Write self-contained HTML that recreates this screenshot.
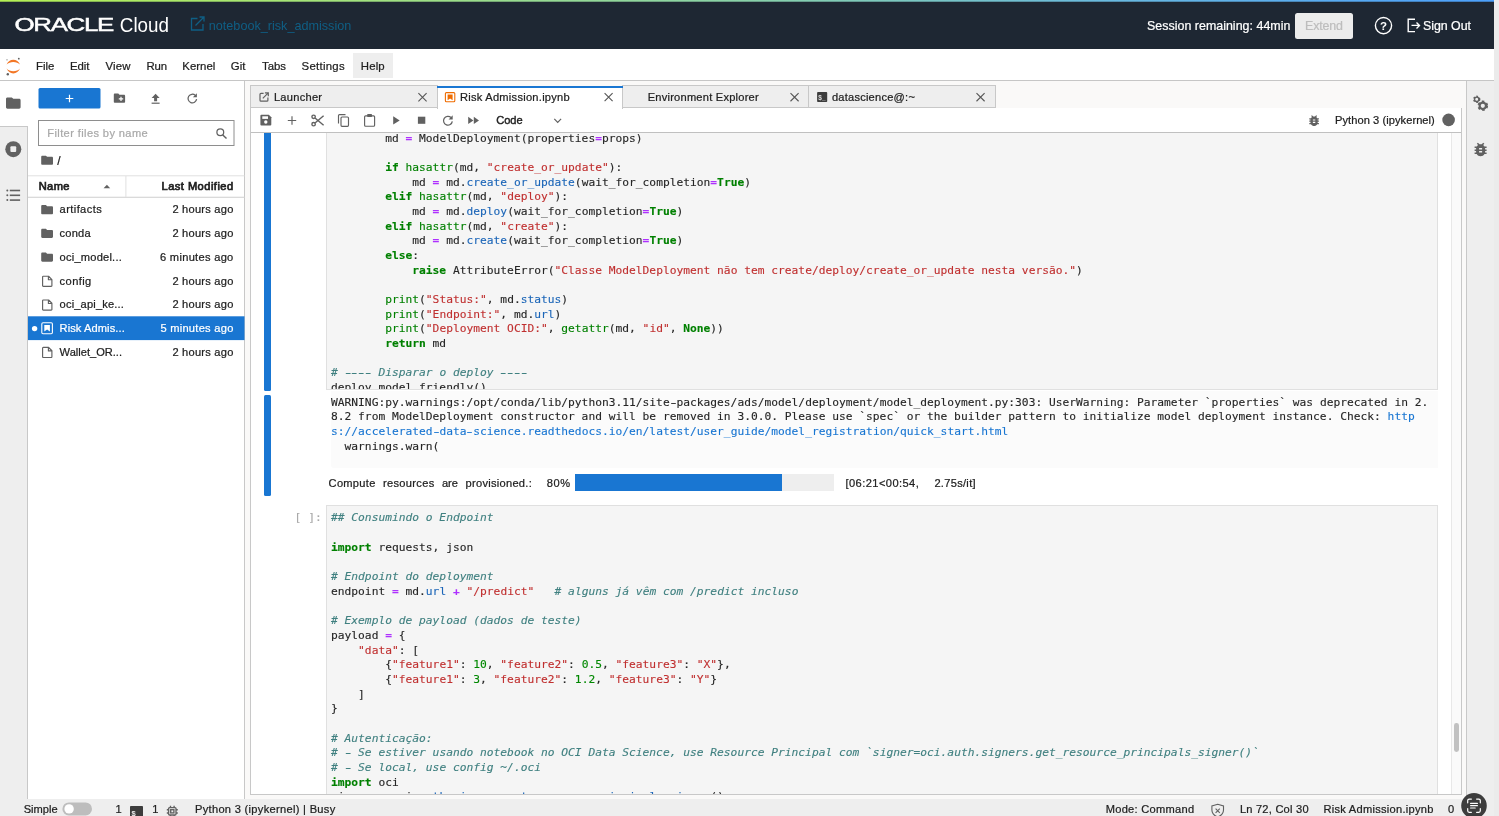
<!DOCTYPE html>
<html lang="en">
<head>
<meta charset="utf-8">
<title>Risk Admission - JupyterLab</title>
<style>
*{box-sizing:border-box;margin:0;padding:0}
html,body{width:1499px;height:816px;overflow:hidden;background:#fff}
body{position:relative;font-family:"Liberation Sans",sans-serif;font-size:11.2px;color:#212121}
.a{position:absolute}
.t{position:absolute;white-space:pre;line-height:1;-webkit-text-stroke:0.22px currentColor}
svg{position:absolute;overflow:visible}
.code{position:absolute;font-family:"DejaVu Sans Mono","Liberation Mono",monospace;font-size:11.25px;line-height:14px;height:14px;white-space:pre;color:#262626;-webkit-text-stroke:0.12px currentColor}
.k{color:#008000;font-weight:bold}
.b{color:#008000}
.s{color:#c03030}
.o{color:#ae30ff;font-weight:bold}
.p{color:#1c66b8}
.c{color:#408080;font-style:italic}
.n{color:#008800}
.lnk{color:#1976d2}
.h{display:inline-block;transform:scaleX(1.55)}
</style>
</head>
<body>
<div class="a" style="left:0;top:0;width:1499px;height:816px;will-change:transform">
<!-- base layout -->
<div class="a" style="left:0;top:0;width:1494px;height:1px;background:linear-gradient(90deg,#b4f054 0%,#a0e080 25%,#88d0a8 50%,#68b8e0 75%,#4ca0fc 100%)"></div>
<div class="a" style="left:0;top:1px;width:1494px;height:1px;background:linear-gradient(90deg,#b4f054 0%,#a0e080 25%,#88d0a8 50%,#68b8e0 75%,#4ca0fc 100%);opacity:0.72;z-index:2"></div>
<div class="a" style="left:0;top:1px;width:1494px;height:48px;background:#1e2733"></div>
<div class="a" style="left:1494px;top:0;width:5px;height:816px;background:#ebebeb"></div>
<div class="a" style="left:0;top:49px;width:1494px;height:32px;background:#fff;border-bottom:1px solid #c6c6c6"></div>
<!-- left sidebar -->
<div class="a" style="left:0;top:81px;width:28px;height:718px;background:#eeeeee;border-right:1px solid #c8c8c8"></div>
<div class="a" style="left:0;top:81px;width:28px;height:46px;background:#fff;border-bottom:1px solid #c8c8c8"></div>
<!-- file browser -->
<div class="a" style="left:28px;top:81px;width:217px;height:718px;background:#fff;border-right:1px solid #c8c8c8"></div>
<!-- dock area -->
<div class="a" style="left:245px;top:81px;width:1221px;height:718px;background:#faf9f8"></div>
<!-- right sidebar -->
<div class="a" style="left:1466px;top:81px;width:28px;height:718px;background:#eeeeee;border-left:1px solid #c8c8c8"></div>
<!-- status bar -->
<div class="a" style="left:0;top:799px;width:1494px;height:17px;background:#eeeeee"></div>

<!--HEADER-ICONS-->
<svg style="left:0;top:2px" width="400" height="47" viewBox="0 0 400 47">
<text transform="translate(14.400,29.300) scale(1.430,1)" font-family="Liberation Sans, sans-serif" font-size="18.100" fill="#fff" stroke="#fff" stroke-width="0.450" letter-spacing="-0.900">ORACLE</text>
<text transform="translate(119.800,29.700) scale(0.975,1)" font-family="Liberation Sans, sans-serif" font-size="19.300" fill="#fff">Cloud</text>
<g fill="none" stroke="#0f5f85" stroke-width="1.300">
<path d="M197.500 16.500h-6v11.500h11.500v-6"/><path d="M195.500 23.500l8.500-8.500M199.500 15h4.500v4.500"/>
</g>
<text x="208.800" y="27.700" font-family="Liberation Sans, sans-serif" font-size="13.600" fill="#0f5f85" textLength="142.500" lengthAdjust="spacingAndGlyphs">notebook_risk_admission</text>
</svg>
<div class="a" style="left:1295px;top:13px;width:57.500px;height:26px;background:#ececec;border-radius:2.500px"></div>
<svg style="left:1370px;top:12px" width="110" height="28" viewBox="0 0 110 28">
<circle cx="13.500" cy="13.600" r="8.100" fill="none" stroke="#fff" stroke-width="1.400"/>
<text x="13.500" y="17.900" font-family="Liberation Sans, sans-serif" font-size="11.500" font-weight="bold" fill="#fff" text-anchor="middle">?</text>
<g fill="none" stroke="#fff" stroke-width="1.400"><path d="M45 7.200h-6.800v12.400h6.800"/><path d="M41.500 13.400h8M46.500 10.400l3 3l-3 3"/></g>
</svg>
<!--MENU-ICONS-->
<svg style="left:5px;top:56px" width="17" height="20" viewBox="0 0 17 20">
<path d="M1.600 8.600C2.800 5.400 5.400 3.800 8.300 3.800s5.500 1.600 6.700 4.800C13.400 6.700 11.000 5.900 8.300 5.900S3.200 6.700 1.600 8.600z" fill="#f37726"/>
<path d="M1.600 12.600C2.800 15.800 5.400 17.400 8.300 17.400s5.500-1.600 6.700-4.800C13.400 14.500 11.000 15.300 8.300 15.300S3.200 14.500 1.600 12.600z" fill="#f37726"/>
<circle cx="13.800" cy="2.700" r="0.900" fill="#616161"/><circle cx="2.800" cy="18.200" r="1.200" fill="#616161"/><circle cx="2.000" cy="3.800" r="0.600" fill="#616161"/>
</svg>
<div class="a" style="left:353px;top:53px;width:39.500px;height:24.500px;background:#eeeeee"></div>
<!--FB-->
<svg style="left:0;top:0" width="260" height="816" viewBox="0 0 260 816">
<path transform="translate(6,97.4) scale(0.73,0.70625)" d="M8 0H2C0.900 0 0 0.900 0 2v12c0 1.100 0.900 2 2 2h16c1.100 0 2-0.900 2-2V4c0-1.100-0.900-2-2-2h-8l-2-2z" fill="#616161"/>
<circle cx="13.300" cy="149.200" r="8" fill="#616161"/><rect x="10.400" y="146.300" width="5.800" height="5.800" rx="1" fill="#eeeeee"/>
<circle cx="7.300" cy="190.5" r="1" fill="#616161"/><rect x="9.800" y="189.7" width="10.300" height="1.600" fill="#616161"/>
<circle cx="7.300" cy="195.3" r="1" fill="#616161"/><rect x="9.800" y="194.5" width="10.300" height="1.600" fill="#616161"/>
<circle cx="7.300" cy="200.1" r="1" fill="#616161"/><rect x="9.800" y="199.3" width="10.300" height="1.600" fill="#616161"/>
<rect x="38.500" y="88" width="62" height="20.600" rx="1.500" fill="#1976d2"/>
<path d="M69.500 94.700v7.600M65.700 98.500h7.600" stroke="#fff" stroke-width="1.200" fill="none"/>
<path transform="translate(113.8,93.6) scale(0.5650000000000001,0.575)" d="M8 0H2C0.900 0 0 0.900 0 2v12c0 1.100 0.900 2 2 2h16c1.100 0 2-0.900 2-2V4c0-1.100-0.900-2-2-2h-8l-2-2z" fill="#616161"/>
<path d="M121 96.700v4.400M118.800 98.900h4.400" stroke="#fff" stroke-width="1.200" fill="none"/>
<path d="M155.600 93.800l4 4.200h-2.500v3.300h-3v-3.300h-2.500z" fill="#616161"/><rect x="151.600" y="102.600" width="8" height="1.200" fill="#616161"/>
<path d="M195.300 95.400a4.300 4.300 0 1 0 1.300 3.800" fill="none" stroke="#616161" stroke-width="1.250"/><path d="M196.900 93.300v4h-4z" fill="#616161"/>
<rect x="38.500" y="120.500" width="195.500" height="25" fill="#fff" stroke="#8e8e8e" stroke-width="1"/>
<circle cx="220.300" cy="132.300" r="3.400" fill="none" stroke="#616161" stroke-width="1.250"/><path d="M222.800 134.900l3.700 3.700" stroke="#616161" stroke-width="1.400"/>
<path transform="translate(41.2,155.7) scale(0.5900000000000001,0.56875)" d="M8 0H2C0.900 0 0 0.900 0 2v12c0 1.100 0.900 2 2 2h16c1.100 0 2-0.900 2-2V4c0-1.100-0.900-2-2-2h-8l-2-2z" fill="#616161"/>
<rect x="28" y="175.300" width="216.500" height="1" fill="#e0e0e0"/>
<rect x="28" y="196.700" width="216.500" height="1.200" fill="#d6d6d6"/>
<rect x="125.400" y="176" width="1" height="21" fill="#e0e0e0"/>
<path d="M103.600 188.200l3.300-3.400l3.300 3.400z" fill="#616161"/>
<path transform="translate(41.2,205.1) scale(0.5900000000000001,0.575)" d="M8 0H2C0.900 0 0 0.900 0 2v12c0 1.100 0.900 2 2 2h16c1.100 0 2-0.900 2-2V4c0-1.100-0.900-2-2-2h-8l-2-2z" fill="#616161"/>
<path transform="translate(41.2,228.82) scale(0.5900000000000001,0.575)" d="M8 0H2C0.900 0 0 0.900 0 2v12c0 1.100 0.900 2 2 2h16c1.100 0 2-0.900 2-2V4c0-1.100-0.900-2-2-2h-8l-2-2z" fill="#616161"/>
<path transform="translate(41.2,252.54) scale(0.5900000000000001,0.575)" d="M8 0H2C0.900 0 0 0.900 0 2v12c0 1.100 0.900 2 2 2h16c1.100 0 2-0.900 2-2V4c0-1.100-0.900-2-2-2h-8l-2-2z" fill="#616161"/>
<path transform="translate(42.0,275.66)" d="M1.300 0.600h5.300l3.300 3.300v6.100a0.700 0.700 0 0 1-0.700 0.700h-7.900a0.700 0.700 0 0 1-0.700-0.700v-8.700a0.700 0.700 0 0 1 0.700-0.700zM6.400 0.800v3.300h3.300" fill="none" stroke="#616161" stroke-width="1.150" stroke-linejoin="round"/>
<path transform="translate(42.0,299.38)" d="M1.300 0.600h5.300l3.300 3.300v6.100a0.700 0.700 0 0 1-0.700 0.700h-7.900a0.700 0.700 0 0 1-0.700-0.700v-8.700a0.700 0.700 0 0 1 0.700-0.700zM6.400 0.800v3.300h3.300" fill="none" stroke="#616161" stroke-width="1.150" stroke-linejoin="round"/>
<rect x="28" y="316.300" width="216.500" height="23.800" fill="#1976d2"/>
<circle cx="34.600" cy="328.600" r="2.700" fill="#fff"/>
<rect x="41.800" y="322.700" width="10.600" height="11.100" rx="1.200" fill="none" stroke="#fff" stroke-width="1.100"/>
<path d="M44.300 325h5.600v6.600l-2.800-2l-2.800 2z" fill="#fff"/>
<path transform="translate(42.0,346.82)" d="M1.300 0.600h5.300l3.300 3.300v6.100a0.700 0.700 0 0 1-0.700 0.700h-7.900a0.700 0.700 0 0 1-0.700-0.700v-8.700a0.700 0.700 0 0 1 0.700-0.700zM6.400 0.800v3.300h3.300" fill="none" stroke="#616161" stroke-width="1.150" stroke-linejoin="round"/>
</svg>
<!--TABS-->
<div class="a" style="left:250.4px;top:85.400px;width:187.6px;height:22.300px;background:#eeeeee;border:1px solid #c8c8c8"></div>
<div class="a" style="left:622.4px;top:85.400px;width:186.89999999999998px;height:22.300px;background:#eeeeee;border:1px solid #c8c8c8"></div>
<div class="a" style="left:808.3px;top:85.400px;width:187.9000000000001px;height:22.300px;background:#eeeeee;border:1px solid #c8c8c8"></div>
<div class="a" style="left:250.400px;top:107.800px;width:1211.600px;height:687px;background:#fff;border:1px solid #c8c8c8;border-top:none"></div>
<div class="a" style="left:437px;top:85.500px;width:185.60000000000002px;height:23px;background:#fff;border-left:1px solid #c8c8c8;border-right:1px solid #c8c8c8"></div><div class="a" style="left:437px;top:85.500px;width:185.60000000000002px;height:2.400px;background:#1976d2"></div>
<div class="a" style="left:251.400px;top:132px;width:1209.600px;height:1px;background:#c0c0c0"></div>
<svg style="left:0;top:0" width="1499" height="140" viewBox="0 0 1499 140">
<g fill="none" stroke="#616161" stroke-width="1.200"><path d="M263.600 93.300h-2.600a1 1 0 0 0-1 1v5.900a1 1 0 0 0 1 1h5.900a1 1 0 0 0 1-1v-2.600"/><path d="M262.800 98.400l5.200-5.200M264.900 92.900h3.400v3.400"/></g>
<path d="M418.4 93.09999999999998L426.6 101.30000000000003M426.6 93.09999999999998L418.4 101.30000000000003" stroke="#555" stroke-width="1.100" fill="none"/>
<path d="M604.6 93.2L612.6 101.2M612.6 93.2L604.6 101.2" stroke="#555" stroke-width="1.100" fill="none"/>
<path d="M790.5 93.14999999999999L798.6 101.25000000000001M798.6 93.14999999999999L790.5 101.25000000000001" stroke="#555" stroke-width="1.100" fill="none"/>
<path d="M976.5 93.14999999999999L984.6 101.25000000000001M984.6 93.14999999999999L976.5 101.25000000000001" stroke="#555" stroke-width="1.100" fill="none"/>
<rect x="445.400" y="92.600" width="9.400" height="9.200" rx="1" fill="none" stroke="#ef6c00" stroke-width="1.100"/><path d="M447.600 94.600h5v5.600l-2.500-1.700l-2.500 1.700z" fill="#ef6c00"/>
<rect x="817.100" y="92.100" width="10.100" height="10" rx="0.800" fill="#3c3c3c"/>
<text x="818.300" y="100.300" font-family="Liberation Sans, sans-serif" font-size="6.500" font-weight="bold" fill="#ddd">$_</text>
<path d="M261.400 114.800h7.400l2.500 2.500v7.300a1 1 0 0 1-1 1h-8.900a1 1 0 0 1-1-1v-8.800a1 1 0 0 1 1-1z" fill="#616161"/><rect x="262.300" y="116.300" width="5.700" height="2.600" fill="#fff"/><circle cx="265.800" cy="122" r="1.700" fill="#fff"/>
<path d="M292 116.300v8.400M287.800 120.500h8.400" stroke="#616161" stroke-width="1.150" fill="none"/>
<g fill="none" stroke="#616161" stroke-width="1.400"><circle cx="313.600" cy="116.800" r="1.700"/><circle cx="313.600" cy="124.200" r="1.700"/><path d="M315 118l8.600 7.200M315 123l8.600-7.200"/></g>
<g fill="none" stroke="#616161" stroke-width="1.150"><rect x="341" y="117" width="7.500" height="9.300" rx="1"/><path d="M338.500 123.600v-8a1 1 0 0 1 1-1h6"/></g>
<g fill="none" stroke="#616161" stroke-width="1.150"><rect x="364.600" y="115.800" width="10" height="10.400" rx="1"/></g><rect x="367.200" y="114" width="4.800" height="3" rx="0.700" fill="#616161"/>
<path d="M393.200 116.300l6.500 4.100l-6.500 4.100z" fill="#616161"/>
<rect x="417.900" y="116.700" width="7.400" height="7.100" fill="#616161"/>
<path d="M451 117.500a4.400 4.400 0 1 0 1.300 3.800" fill="none" stroke="#616161" stroke-width="1.250"/><path d="M452.700 115.300v4.100h-4.100z" fill="#616161"/>
<path d="M468.200 116.800l5.200 3.600l-5.200 3.600zM473.800 116.800l5.200 3.600l-5.200 3.600z" fill="#616161"/>
<path d="M554.300 118.900l3.400 3.400l3.400-3.400" fill="none" stroke="#616161" stroke-width="1.200"/>
<path transform="translate(1306.90,113.40) scale(0.6)" d="M20 8h-2.810c-.450-.780-1.070-1.450-1.820-1.960L17 4.410 15.590 3l-2.170 2.170C12.960 5.060 12.490 5 12 5c-.490 0-.960.060-1.410.170L8.410 3 7 4.410l1.620 1.630C7.880 6.550 7.260 7.220 6.810 8H4v2h2.090c-.050.330-.090.660-.090 1v1H4v2h2v1c0 .340.040.670.090 1H4v2h2.810c1.040 1.790 2.970 3 5.190 3s4.150-1.210 5.190-3H20v-2h-2.090c.050-.330.090-.660.090-1v-1h2v-2h-2v-1c0-.340-.040-.670-.090-1H20V8zm-6 8h-4v-2h4v2zm0-4h-4v-2h4v2z" fill="#616161"/>
<circle cx="1448.600" cy="119.900" r="6.300" fill="#616161"/>
</svg>
<svg style="left:0;top:0" width="1499" height="200" viewBox="0 0 1499 200">
<circle cx="1476.7" cy="99.3" r="2.80" fill="none" stroke="#616161" stroke-width="1.800" stroke-dasharray="1.57 1.57"/><circle cx="1476.7" cy="99.3" r="2.20" fill="none" stroke="#616161" stroke-width="1.40"/>
<circle cx="1482.8" cy="105.8" r="4.40" fill="none" stroke="#616161" stroke-width="1.800" stroke-dasharray="2.41 2.41"/><circle cx="1482.8" cy="105.8" r="3.20" fill="none" stroke="#616161" stroke-width="2.20"/>
<path transform="translate(1471.60,140.45) scale(0.75)" d="M20 8h-2.810c-.450-.780-1.070-1.450-1.820-1.960L17 4.410 15.590 3l-2.170 2.170C12.960 5.060 12.490 5 12 5c-.490 0-.960.060-1.410.170L8.410 3 7 4.410l1.620 1.630C7.880 6.550 7.260 7.220 6.810 8H4v2h2.090c-.050.330-.090.660-.090 1v1H4v2h2v1c0 .340.040.670.090 1H4v2h2.810c1.040 1.790 2.970 3 5.190 3s4.150-1.210 5.190-3H20v-2h-2.090c.050-.330.090-.660.090-1v-1h2v-2h-2v-1c0-.340-.040-.670-.090-1H20V8zm-6 8h-4v-2h4v2zm0-4h-4v-2h4v2z" fill="#616161"/>
</svg>
<div class="a" style="left:251.400px;top:133.0px;width:1209.600px;height:661.3px;overflow:hidden">
<div class="a" style="left:-251.400px;top:-133.0px;width:1499px;height:816px">
<div class="a" style="left:326.200px;top:120px;width:1112px;height:270.300px;background:#f5f5f5;border:1px solid #e0e0e0;overflow:hidden"><div class="a" style="left:-327.200px;top:-121px;width:1499px;height:816px"><div class="code" style="left:331.0px;top:132px">        md <span class="o">=</span> ModelDeployment(properties<span class="o">=</span>props)</div>
<div class="code" style="left:331.0px;top:161px">        <span class="k">if</span> <span class="b">hasattr</span>(md, <span class="s">"create_or_update"</span>):</div>
<div class="code" style="left:331.0px;top:176px">            md <span class="o">=</span> md.<span class="p">create_or_update</span>(wait_for_completion<span class="o">=</span><span class="k">True</span>)</div>
<div class="code" style="left:331.0px;top:190px">        <span class="k">elif</span> <span class="b">hasattr</span>(md, <span class="s">"deploy"</span>):</div>
<div class="code" style="left:331.0px;top:205px">            md <span class="o">=</span> md.<span class="p">deploy</span>(wait_for_completion<span class="o">=</span><span class="k">True</span>)</div>
<div class="code" style="left:331.0px;top:220px">        <span class="k">elif</span> <span class="b">hasattr</span>(md, <span class="s">"create"</span>):</div>
<div class="code" style="left:331.0px;top:234px">            md <span class="o">=</span> md.<span class="p">create</span>(wait_for_completion<span class="o">=</span><span class="k">True</span>)</div>
<div class="code" style="left:331.0px;top:249px">        <span class="k">else</span>:</div>
<div class="code" style="left:331.0px;top:264px">            <span class="k">raise</span> AttributeError(<span class="s">"Classe ModelDeployment não tem create/deploy/create_or_update nesta versão."</span>)</div>
<div class="code" style="left:331.0px;top:293px">        <span class="b">print</span>(<span class="s">"Status:"</span>, md.<span class="p">status</span>)</div>
<div class="code" style="left:331.0px;top:308px">        <span class="b">print</span>(<span class="s">"Endpoint:"</span>, md.<span class="p">url</span>)</div>
<div class="code" style="left:331.0px;top:322px">        <span class="b">print</span>(<span class="s">"Deployment OCID:"</span>, <span class="b">getattr</span>(md, <span class="s">"id"</span>, <span class="k">None</span>))</div>
<div class="code" style="left:331.0px;top:337px">        <span class="k">return</span> md</div>
<div class="code" style="left:331.0px;top:366px"><span class="c"># <span class="h">-</span><span class="h">-</span><span class="h">-</span><span class="h">-</span> Disparar o deploy <span class="h">-</span><span class="h">-</span><span class="h">-</span><span class="h">-</span></span></div>
<div class="code" style="left:331.0px;top:381px">deploy_model_friendly()</div></div></div>
<div class="a" style="left:264.200px;top:120px;width:6.900px;height:270.600px;background:#1976d2;border-radius:1.500px"></div>
<div class="a" style="left:264.200px;top:395.100px;width:6.900px;height:100.800px;background:#1976d2;border-radius:1.500px"></div>
<div class="a" style="left:330.500px;top:390.600px;width:1107.700px;height:77.500px;background:#fbfbfb;border-radius:0 0 0 3px"></div>
<div class="code" style="left:331.0px;top:396px">WARNING:py.warnings:/opt/conda/lib/python3.11/site<span class="h">-</span>packages/ads/model/deployment/model_deployment.py:303: UserWarning: Parameter `properties` was deprecated in 2.</div>
<div class="code" style="left:331.0px;top:410px">8.2 from ModelDeployment constructor and will be removed in 3.0.0. Please use `spec` or the builder pattern to initialize model deployment instance. Check: <span class="lnk">http</span></div>
<div class="code" style="left:331.0px;top:425px"><span class="lnk">s://accelerated<span class="h">-</span>data<span class="h">-</span>science.readthedocs.io/en/latest/user_guide/model_registration/quick_start.html</span></div>
<div class="code" style="left:331.0px;top:440px">  warnings.warn(</div>
<div class="a" style="left:574.700px;top:474px;width:259.700px;height:16.600px;background:#eeeeee"></div>
<div class="a" style="left:574.700px;top:474px;width:207.700px;height:16.600px;background:#1976d2"></div>
<div class="a" style="left:326.200px;top:504.600px;width:1112px;height:320px;background:#f5f5f5;border:1px solid #e0e0e0"></div>
<div class="code" style="left:331.0px;top:511px"><span class="c">## Consumindo o Endpoint</span></div>
<div class="code" style="left:331.0px;top:541px"><span class="k">import</span> requests, json</div>
<div class="code" style="left:331.0px;top:570px"><span class="c"># Endpoint do deployment</span></div>
<div class="code" style="left:331.0px;top:585px">endpoint <span class="o">=</span> md.<span class="p">url</span> <span class="o">+</span> <span class="s">"/predict"</span>   <span class="c"># alguns já vêm com /predict incluso</span></div>
<div class="code" style="left:331.0px;top:614px"><span class="c"># Exemplo de payload (dados de teste)</span></div>
<div class="code" style="left:331.0px;top:629px">payload <span class="o">=</span> {</div>
<div class="code" style="left:331.0px;top:644px">    <span class="s">"data"</span>: [</div>
<div class="code" style="left:331.0px;top:658px">        {<span class="s">"feature1"</span>: <span class="n">10</span>, <span class="s">"feature2"</span>: <span class="n">0.5</span>, <span class="s">"feature3"</span>: <span class="s">"X"</span>},</div>
<div class="code" style="left:331.0px;top:673px">        {<span class="s">"feature1"</span>: <span class="n">3</span>, <span class="s">"feature2"</span>: <span class="n">1.2</span>, <span class="s">"feature3"</span>: <span class="s">"Y"</span>}</div>
<div class="code" style="left:331.0px;top:688px">    ]</div>
<div class="code" style="left:331.0px;top:702px">}</div>
<div class="code" style="left:331.0px;top:732px"><span class="c"># Autenticação:</span></div>
<div class="code" style="left:331.0px;top:746px"><span class="c"># <span class="h">-</span> Se estiver usando notebook no OCI Data Science, use Resource Principal com `signer=oci.auth.signers.get_resource_principals_signer()`</span></div>
<div class="code" style="left:331.0px;top:761px"><span class="c"># <span class="h">-</span> Se local, use config ~/.oci</span></div>
<div class="code" style="left:331.0px;top:776px"><span class="k">import</span> oci</div>
<div class="code" style="left:331.0px;top:790px">signer <span class="o">=</span> oci.<span class="p">auth</span>.<span class="p">signers</span>.<span class="p">get_resource_principals_signer</span>()</div>
<div class="code" style="left:294.600px;top:511px;color:#a8a8a8">[ ]:</div>
<div class="a" style="left:1451px;top:133px;width:10px;height:662px;background:#fafafa;border-left:1px solid #e8e8e8"></div>
<div class="a" style="left:1454px;top:722.800px;width:4.700px;height:29.200px;background:#c1c1c1;border-radius:2.400px"></div>
</div></div>
<!--STATUS-ICONS-->
<div class="a" style="left:0;top:798.500px;width:1494px;height:18px;overflow:hidden">
<svg style="left:0;top:-798.500px" width="1499" height="830" viewBox="0 0 1499 830">
<rect x="62.400" y="802.400" width="29.600" height="13" rx="6.500" fill="#bdbdbd"/><circle cx="69.100" cy="808.900" r="4.700" fill="#fff"/>
<rect x="130" y="806" width="13" height="13" rx="0.800" fill="#3c3c3c"/><text x="131.400" y="816.300" font-family="Liberation Sans, sans-serif" font-size="7.500" font-weight="bold" fill="#eee">$_</text>
<g fill="none" stroke="#616161" stroke-width="1.350"><rect x="168.600" y="807.600" width="7.400" height="7.400" rx="1"/><rect x="170.700" y="809.700" width="3.200" height="3.200"/><path d="M170.500 807.600v-1.800M174.100 807.600v-1.800M168.600 809.700h-1.800M168.600 813h-1.800M176 809.700h1.800M176 813h1.800M170.500 815v1.500M174.100 815v1.500"/></g>
<g fill="none" stroke="#616161" stroke-width="1.100"><path d="M1217.700 804.300l5.800 1.700v4c0 3.300-2.400 5.600-5.800 7c-3.400-1.400-5.800-3.700-5.800-7v-4z"/><path d="M1215.600 808.600l4.200 4.200M1219.800 808.600l-4.200 4.200"/></g>
</svg></div>
<svg style="left:0;top:0" width="1499" height="816" viewBox="0 0 1499 816">
<circle cx="1474" cy="805.700" r="12.800" fill="#3d3d3d"/>
<g fill="none" stroke="#fff" stroke-width="1.200" stroke-linecap="round"><path d="M1467.700 802.800v-2.200a1.500 1.500 0 0 1 1.500-1.500h2.200M1476.600 799.100h2.200a1.500 1.500 0 0 1 1.500 1.500v2.200M1480.300 808.600v2.200a1.500 1.500 0 0 1-1.500 1.500h-2.200M1471.400 812.300h-2.200a1.500 1.500 0 0 1-1.500-1.500v-2.200"/><path d="M1470.600 803.400h6.800M1470.600 805.700h6.800M1470.600 808h4.600"/></g>
</svg>
<div class="t" style="left:1147.0px;top:20.00px;font-size:12.40px;color:#ffffff;letter-spacing:0.034px;">Session remaining: 44min</div>
<div class="t" style="left:1305.1px;top:20.00px;font-size:12.40px;color:#bdbdbd;letter-spacing:-0.180px;">Extend</div>
<div class="t" style="left:1423.0px;top:20.00px;font-size:12.40px;color:#ffffff;letter-spacing:-0.027px;">Sign Out</div>
<div class="t" style="left:36.0px;top:61.00px;font-size:11.40px;color:#212121;letter-spacing:-0.040px;">File</div>
<div class="t" style="left:69.9px;top:61.00px;font-size:11.40px;color:#212121;letter-spacing:-0.035px;">Edit</div>
<div class="t" style="left:105.4px;top:61.00px;font-size:11.40px;color:#212121;letter-spacing:0.229px;">View</div>
<div class="t" style="left:146.5px;top:61.00px;font-size:11.40px;color:#212121;letter-spacing:-0.202px;">Run</div>
<div class="t" style="left:182.3px;top:61.00px;font-size:11.40px;color:#212121;letter-spacing:0.010px;">Kernel</div>
<div class="t" style="left:230.8px;top:61.00px;font-size:11.40px;color:#212121;letter-spacing:0.046px;">Git</div>
<div class="t" style="left:262.0px;top:61.00px;font-size:11.40px;color:#212121;letter-spacing:-0.016px;">Tabs</div>
<div class="t" style="left:301.5px;top:61.00px;font-size:11.40px;color:#212121;letter-spacing:0.291px;">Settings</div>
<div class="t" style="left:360.8px;top:61.00px;font-size:11.40px;color:#212121;letter-spacing:0.141px;">Help</div>
<div class="t" style="left:47.3px;top:128.00px;font-size:11.10px;color:#a9a9a9;letter-spacing:0.385px;">Filter files by name</div>
<div class="t" style="left:57.3px;top:155.00px;font-size:12.00px;color:#212121;">/</div>
<div class="t" style="left:38.7px;top:181.00px;font-size:11.10px;color:#212121;letter-spacing:0.402px;-webkit-text-stroke:0.7px currentColor;">Name</div>
<div class="t" style="left:161.5px;top:181.00px;font-size:11.10px;color:#212121;letter-spacing:0.470px;-webkit-text-stroke:0.7px currentColor;">Last Modified</div>
<div class="t" style="left:59.6px;top:204.00px;font-size:11.10px;color:#212121;letter-spacing:0.406px;">artifacts</div>
<div class="t" style="left:172.4px;top:204.00px;font-size:11.10px;color:#212121;letter-spacing:0.236px;">2 hours ago</div>
<div class="t" style="left:59.6px;top:228.00px;font-size:11.10px;color:#212121;letter-spacing:0.213px;">conda</div>
<div class="t" style="left:172.4px;top:228.00px;font-size:11.10px;color:#212121;letter-spacing:0.236px;">2 hours ago</div>
<div class="t" style="left:59.6px;top:252.00px;font-size:11.10px;color:#212121;letter-spacing:0.214px;">oci_model...</div>
<div class="t" style="left:160.0px;top:252.00px;font-size:11.10px;color:#212121;letter-spacing:0.300px;">6 minutes ago</div>
<div class="t" style="left:59.6px;top:276.00px;font-size:11.10px;color:#212121;letter-spacing:0.415px;">config</div>
<div class="t" style="left:172.4px;top:276.00px;font-size:11.10px;color:#212121;letter-spacing:0.236px;">2 hours ago</div>
<div class="t" style="left:59.6px;top:299.00px;font-size:11.10px;color:#212121;letter-spacing:0.162px;">oci_api_ke...</div>
<div class="t" style="left:172.4px;top:299.00px;font-size:11.10px;color:#212121;letter-spacing:0.236px;">2 hours ago</div>
<div class="t" style="left:59.6px;top:323.00px;font-size:11.10px;color:#ffffff;letter-spacing:0.084px;">Risk Admis...</div>
<div class="t" style="left:160.4px;top:323.00px;font-size:11.10px;color:#ffffff;letter-spacing:0.269px;">5 minutes ago</div>
<div class="t" style="left:59.6px;top:347.00px;font-size:11.10px;color:#212121;letter-spacing:-0.006px;">Wallet_OR...</div>
<div class="t" style="left:172.4px;top:347.00px;font-size:11.10px;color:#212121;letter-spacing:0.236px;">2 hours ago</div>
<div class="t" style="left:273.9px;top:92.00px;font-size:11.10px;color:#212121;letter-spacing:0.267px;">Launcher</div>
<div class="t" style="left:459.9px;top:92.00px;font-size:11.10px;color:#212121;letter-spacing:0.264px;">Risk Admission.ipynb</div>
<div class="t" style="left:647.7px;top:92.00px;font-size:11.10px;color:#212121;letter-spacing:0.226px;">Environment Explorer</div>
<div class="t" style="left:831.9px;top:92.00px;font-size:11.10px;color:#212121;letter-spacing:0.226px;">datascience@:~</div>
<div class="t" style="left:496.3px;top:115.00px;font-size:11.10px;color:#212121;letter-spacing:-0.083px;-webkit-text-stroke:0.4px currentColor;">Code</div>
<div class="t" style="left:1335.0px;top:115.00px;font-size:11.10px;color:#212121;letter-spacing:0.061px;">Python 3 (ipykernel)</div>
<div class="t" style="left:328.6px;top:478.00px;font-size:11.10px;color:#212121;letter-spacing:0.283px;">Compute</div>
<div class="t" style="left:383.0px;top:478.00px;font-size:11.10px;color:#212121;letter-spacing:0.309px;">resources</div>
<div class="t" style="left:442.0px;top:478.00px;font-size:11.10px;color:#212121;letter-spacing:-0.049px;">are</div>
<div class="t" style="left:465.6px;top:478.00px;font-size:11.10px;color:#212121;letter-spacing:0.269px;">provisioned.:</div>
<div class="t" style="left:546.8px;top:478.00px;font-size:11.10px;color:#212121;letter-spacing:0.527px;">80%</div>
<div class="t" style="left:845.5px;top:478.00px;font-size:11.10px;color:#212121;letter-spacing:0.425px;">[06:21&lt;00:54,</div>
<div class="t" style="left:934.4px;top:478.00px;font-size:11.10px;color:#212121;letter-spacing:0.293px;">2.75s/it]</div>
<div class="t" style="left:23.7px;top:804.00px;font-size:11.10px;color:#212121;letter-spacing:-0.004px;">Simple</div>
<div class="t" style="left:115.6px;top:804.00px;font-size:11.10px;color:#212121;">1</div>
<div class="t" style="left:152.3px;top:804.00px;font-size:11.10px;color:#212121;">1</div>
<div class="t" style="left:195.0px;top:804.00px;font-size:11.10px;color:#212121;letter-spacing:0.301px;">Python 3 (ipykernel) | Busy</div>
<div class="t" style="left:1105.7px;top:804.00px;font-size:11.10px;color:#212121;letter-spacing:0.277px;">Mode: Command</div>
<div class="t" style="left:1239.9px;top:804.00px;font-size:11.10px;color:#212121;letter-spacing:0.223px;">Ln 72, Col 30</div>
<div class="t" style="left:1323.5px;top:804.00px;font-size:11.10px;color:#212121;letter-spacing:0.264px;">Risk Admission.ipynb</div>
<div class="t" style="left:1448.0px;top:804.00px;font-size:11.10px;color:#212121;">0</div>
</div>
</body>
</html>
